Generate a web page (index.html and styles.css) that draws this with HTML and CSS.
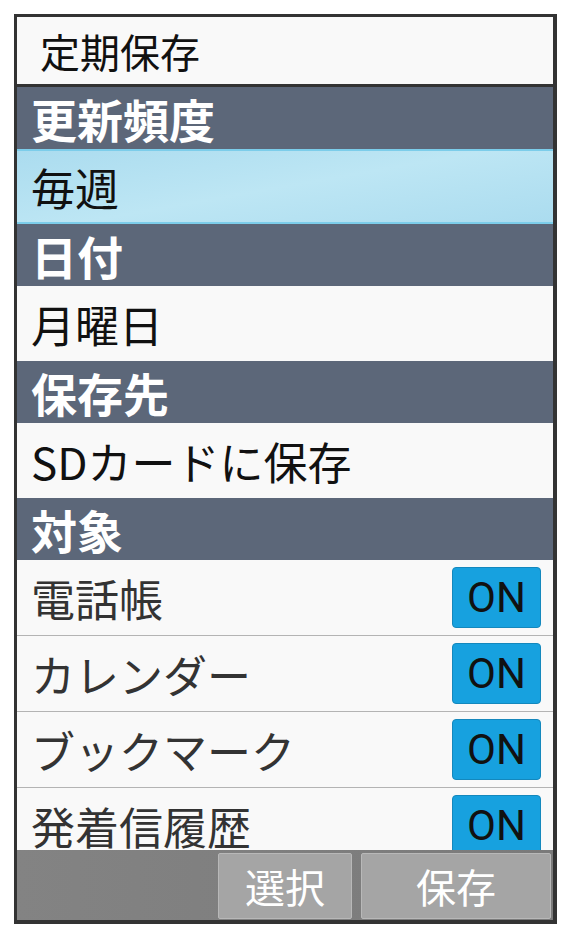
FILE: index.html
```html
<!DOCTYPE html>
<html>
<head>
<meta name="viewport" content="width=device-width, initial-scale=1.0">
<link rel="stylesheet" href="styles.css">
</head>
<body>

<div class="phone">
  <div class="title">定期保存</div>

  <div class="list">
    <div class="section">更新頻度</div>
    <div class="item selected">毎週</div>

    <div class="section">日付</div>
    <div class="item">月曜日</div>

    <div class="section">保存先</div>
    <div class="item">SDカードに保存</div>

    <div class="section">対象</div>
    <div class="row">
      <span class="label">電話帳</span>
      <span class="toggle">ON</span>
    </div>
    <div class="row">
      <span class="label">カレンダー</span>
      <span class="toggle">ON</span>
    </div>
    <div class="row">
      <span class="label">ブックマーク</span>
      <span class="toggle">ON</span>
    </div>
    <div class="row">
      <span class="label">発着信履歴</span>
      <span class="toggle">ON</span>
    </div>
  </div>

  <div class="softkeys">
    <div class="softkey key-select">選択</div>
    <div class="softkey key-save">保存</div>
  </div>
</div>

</body>
</html>
```

FILE: styles.css
```css
* {
  box-sizing: border-box;
}

body {
  margin: 0;
  padding: 14px;
  background: #ffffff;
  font-family: "Noto Sans CJK JP", "Noto Sans", sans-serif;
}

.phone {
  width: 543px;
  height: 910px;
  border: 3px solid #333333;
  border-right-width: 4px;
  border-bottom-width: 4px;
  display: flex;
  flex-direction: column;
  background: #f9f9f9;
}

.title {
  height: 70px;
  flex: none;
  padding-left: 23px;
  display: flex;
  align-items: center;
  font-size: 40px;
  color: #111111;
  background: #f9f9f9;
  border-bottom: 3px solid #333333;
  line-height: 1;
}

/* scrolling area, clipped at the soft keys */
.list {
  flex: 1;
  overflow: hidden;
}

.section {
  height: 62px;
  padding-left: 14px;
  display: flex;
  align-items: center;
  background: #5c6779;
  color: #ffffff;
  font-size: 46px;
  font-weight: bold;
  line-height: 1;
}

.item {
  height: 75px;
  padding-left: 14px;
  display: flex;
  align-items: center;
  font-size: 44px;
  color: #111111;
  background: #f9f9f9;
  line-height: 1;
}

.selected {
  background: linear-gradient(170deg, #abdcef, #bde6f4 50%, #abdcef);
  border-top: 2px solid #7ccdea;
  border-bottom: 2px solid #7ccdea;
}

.row {
  height: 76px;
  padding-left: 14px;
  padding-right: 12px;
  display: flex;
  align-items: center;
  justify-content: space-between;
  border-bottom: 1px solid #b4b4b4;
  background: #f9f9f9;
}

.label {
  font-size: 44px;
  color: #333333;
  line-height: 1;
}

.toggle {
  width: 89px;
  height: 61px;
  display: flex;
  align-items: center;
  justify-content: center;
  background: #17a1df;
  border: 1px solid #1488bd;
  border-radius: 4px;
  font-family: Roboto, "Liberation Sans", sans-serif;
  font-size: 42px;
  color: #111111;
  line-height: 1;
}

.softkeys {
  height: 70px;
  flex: none;
  display: flex;
  justify-content: flex-end;
  gap: 9px;
  padding: 3px 2px 1px 0;
  background: linear-gradient(90deg, #838383, #7a7a7a);
}

.softkey {
  display: flex;
  align-items: center;
  justify-content: center;
  background: #a5a5a5;
  border: 1px solid #b8b8b8;
  border-radius: 2px;
  color: #ffffff;
  font-size: 40px;
  line-height: 1;
}

.key-select {
  width: 134px;
}

.key-save {
  width: 190px;
}
```
